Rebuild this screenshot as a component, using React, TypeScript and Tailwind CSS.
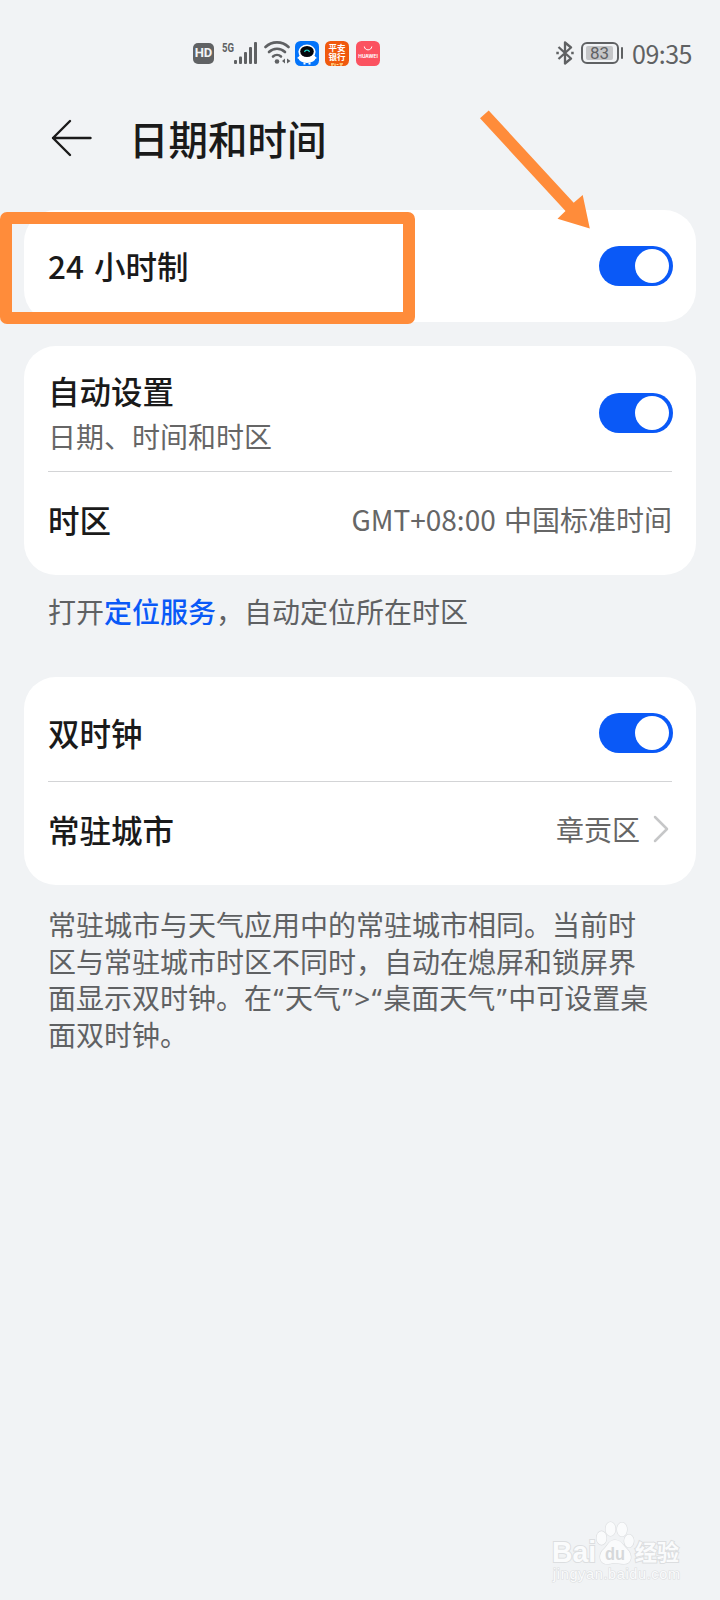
import type { ReactNode } from "react";

function Switch() {
  return (
    <button
      role="switch"
      aria-checked="true"
      className="-mr-px flex h-10 w-[74px] shrink-0 items-center justify-end rounded-full bg-[#0a59f7] pr-1"
    >
      <span className="h-[34px] w-[34px] rounded-full bg-white" />
    </button>
  );
}

function Card({ children, className = "" }: { children: ReactNode; className?: string }) {
  return (
    <section className={`mx-6 rounded-[32px] bg-white px-6 py-2 ${className}`}>{children}</section>
  );
}

function Row({
  label,
  sub,
  divider,
  children,
}: {
  label: string;
  sub?: string;
  divider?: boolean;
  children: ReactNode;
}) {
  return (
    <div
      className={`flex items-center justify-between ${sub ? "h-[117px]" : "h-24"} ${divider ? "border-t border-[#d3d4d6]" : ""}`}
    >
      <div className={sub ? "pt-px" : "pb-0.5"}>
        <div className="text-[31.5px] leading-[44px] font-medium [word-spacing:3px] text-[#1a1a1a]">{label}</div>
        {sub && <div className="pt-0.5 text-[28px] leading-[44px] text-[#666]">{sub}</div>}
      </div>
      {children}
    </div>
  );
}

function StatusBar() {
  return (
    <header className="flex h-[106px] items-center text-[#5f6163]">
      <div className="ml-[193px] flex h-[21px] w-[21px] items-center justify-center rounded-[5px] bg-[#606264] font-['Roboto'] text-[13px] font-bold text-[#f1f3f5]">
        HD
      </div>
      <svg className="ml-2 h-6 w-[35px] overflow-visible" viewBox="0 0 35 24" fill="currentColor">
        <text x="0" y="11" fontFamily="Roboto" fontSize="13" fontWeight="700" textLength="12" lengthAdjust="spacingAndGlyphs">
          5G
        </text>
        <rect x="12" y="19" width="3" height="4" rx="1" />
        <rect x="17" y="15.5" width="3" height="7.5" rx="1" />
        <rect x="22" y="11" width="3" height="12" rx="1" />
        <rect x="27" y="6" width="3" height="17" rx="1" />
        <rect x="32" y="1" width="3" height="22" rx="1" />
      </svg>
      <svg className="ml-[7px] h-6 w-[27px]" viewBox="0 0 27 24" fill="none" stroke="currentColor" strokeWidth="2.6" strokeLinecap="round">
        <path d="M1.5 6a16.5 16.5 0 0 1 23 0" />
        <path d="M5 11a11.5 11.5 0 0 1 16 0" />
        <path d="M9 15.5a6 6 0 0 1 8 0" />
        <circle cx="13" cy="20.5" r="2.3" fill="currentColor" stroke="none" />
        <path d="M21 17.5v5l-3-2.5zM23 17.5v5l3.5-2.5z" fill="currentColor" stroke="none" />
      </svg>
      <svg className="ml-1 h-[25px] w-6" viewBox="0 0 24 25">
        <rect width="24" height="25" rx="5.5" fill="#0474fa" />
        <ellipse cx="12" cy="17" rx="8.5" ry="5" fill="#fff" />
        <path d="M2 17l4-3v5zM22 17l-4-3v5z" fill="#fff" />
        <ellipse cx="12" cy="10.8" rx="8.6" ry="7.3" fill="#fff" />
        <ellipse cx="12" cy="10.5" rx="6.8" ry="5.6" fill="#05070d" />
        <path d="M9.5 11a2.6 2.6 0 0 1 5 0" stroke="#22d3c5" strokeWidth="1.3" fill="none" />
        <path d="M9.5 21.5v2M14.5 21.5v2" stroke="#fff" strokeWidth="2" />
      </svg>
      <div className="ml-1.5 flex h-[25px] w-6 flex-col items-center rounded-[5.5px] bg-[#f0590d] pt-[2px] text-[8.5px] leading-[9.5px] font-bold text-white">
        <span>平安</span>
        <span>银行</span>
        <svg className="mt-px h-[3px] w-3" viewBox="0 0 12 3" stroke="#ffdf8a" strokeWidth="1.2">
          <path d="M0 .8h3M1 .8V3M4 .5v2.5M5.5 1.5h2M8.5 .8h3.500M10 .8V3" />
        </svg>
      </div>
      <svg className="ml-[7px] h-[25px] w-6" viewBox="0 0 24 25">
        <rect width="24" height="25" rx="5.5" fill="#fb5260" />
        <path d="M8.3 5.5c.5 4.5 7 4.5 7.5 0" stroke="#fff" strokeWidth="1" fill="none" />
        <text x="2.3" y="17" fill="#fff" fontFamily="Inter" fontSize="4.8" fontWeight="700" textLength="19.5">
          HUAWEI
        </text>
      </svg>
      <svg className="ml-auto h-6 w-[18px]" viewBox="0 0 18 24" fill="none" stroke="currentColor" strokeWidth="2.3" strokeLinejoin="round">
        <path d="M2.5 6l12.500 11.500L9 22.500V1.500l6 5L2.500 18" />
        <path d="M.3 12h2.500M15.200 12h2.500" />
      </svg>
      <div className="ml-[7px] flex h-[22px] w-[38px] items-center justify-center rounded-[6px] border-2 border-[#5f6163]">
        <span className="flex h-[14px] w-[27px] items-center justify-center rounded-[2px] bg-[#c5c6c8] font-['Roboto'] text-[17px] leading-[14px]">
          83
        </span>
      </div>
      <span className="ml-[2px] h-3 w-[2.5px] rounded-sm bg-[#5f6163]" />
      <span className="mr-[28px] ml-[9px] w-[60px] text-[25px] leading-none tracking-[-0.5px] whitespace-nowrap">
        09:35
      </span>
    </header>
  );
}

function Watermark() {
  return (
    <svg className="absolute top-[1518px] left-[548px] h-[68px] w-[140px]" viewBox="0 0 140 68" fill="#fafbfc" stroke="#dcdee0" strokeWidth="1.2" paintOrder="stroke">
      <text x="4" y="44" fontFamily="Liberation Sans" fontSize="30" fontWeight="700" textLength="44" lengthAdjust="spacingAndGlyphs" strokeWidth="2">
        Bai
      </text>
      <ellipse cx="53.5" cy="20" rx="5" ry="6.8" />
      <ellipse cx="62.5" cy="11" rx="5" ry="7" />
      <ellipse cx="74" cy="11.5" rx="5" ry="7" />
      <ellipse cx="81" cy="23" rx="4.8" ry="6.5" />
      <path d="M67 22c-6 0-7 5-11 9-6 5-5 15 3 15 4 0 5-1 8-1s5 1 9 1c8 0 9-9 3-15-4-4-6-9-12-9z" />
      <text x="57" y="42" fontFamily="Liberation Sans" fontSize="19" fill="#d6d8da" stroke="none" fontWeight="700" textLength="20" lengthAdjust="spacingAndGlyphs">
        du
      </text>
      <text x="87" y="42" fontFamily="Noto Sans CJK SC" fontSize="22" fontWeight="700" textLength="44" strokeWidth="2">
        经验
      </text>
      <text x="5" y="61" fontFamily="Liberation Sans" fontSize="14.5" textLength="127" lengthAdjust="spacing" strokeWidth="1.2">
        jingyan.baidu.com
      </text>
    </svg>
  );
}

const noteLines = [
  "常驻城市与天气应用中的常驻城市相同。当前时",
  "区与常驻城市时区不同时，自动在熄屏和锁屏界",
  "面显示双时钟。在“天气”>“桌面天气”中可设置桌",
  "面双时钟。",
];

export default function App() {
  return (
    <div
      lang="zh-CN"
      className="relative h-[1600px] w-[720px] overflow-hidden bg-[#f1f3f5] font-['Noto_Sans_CJK_SC',sans-serif]"
    >
      <StatusBar />

      <div className="flex h-[104px] items-start pl-[51px]">
        <svg className="mt-3 h-10 w-[42px]" viewBox="0 0 42 40" fill="none" stroke="#1a1a1a" strokeWidth="2.4" strokeLinecap="round" strokeLinejoin="round">
          <path d="M19 3L2 20l17 17M2 20h37.500" />
        </svg>
        <h1 className="ml-[36px] text-[39.5px] leading-[64px] font-medium text-[#1a1a1a]">日期和时间</h1>
      </div>

      <Card>
        <Row label="24 小时制">
          <Switch />
        </Row>
      </Card>

      <Card className="mt-6">
        <Row label="自动设置" sub="日期、时间和时区">
          <Switch />
        </Row>
        <Row label="时区" divider>
          <span className="pb-0.5 text-[28px] [word-spacing:2px] text-[#666]">GMT+08:00 中国标准时间</span>
        </Row>
      </Card>

      <p className="mx-12 mt-[15px] h-[87px] text-[28px] leading-[42px] text-[#5f6163]">
        打开<span className="font-medium text-[#0a59f7]">定位服务</span>，自动定位所在时区
      </p>

      <Card>
        <Row label="双时钟">
          <Switch />
        </Row>
        <Row label="常驻城市" divider>
          <span className="flex items-center pb-0.5 text-[28px] text-[#666]">
            章贡区
            <svg className="mr-[3px] ml-[13px] h-7 w-4" viewBox="0 0 16 28" fill="none" stroke="#c6c7c8" strokeWidth="2.5" strokeLinecap="round" strokeLinejoin="round">
              <path d="M2 2l12 12L2 26" />
            </svg>
          </span>
        </Row>
      </Card>

      <p className="mx-12 mt-[22px] text-[28px] leading-[36.7px] whitespace-nowrap text-[#5f6163]">
        {noteLines.map((line) => (
          <span key={line} className="block font-['Noto_Sans','Noto_Sans_CJK_SC',sans-serif]">
            {line.split(/([“”])/).map((part, i) =>
              part === "“" || part === "”" ? (
                <span key={i} className="px-[1.5px]">
                  {part}
                </span>
              ) : (
                part
              ),
            )}
          </span>
        ))}
      </p>

      {/* Tutorial marks drawn over the page */}
      <div className="absolute top-[212px] left-0 h-28 w-[415px] rounded-[7px] border-12 border-[#ff8c3a]" />
      <svg className="absolute top-[106px] left-[476px] h-[126px] w-[118px]" viewBox="476 106 118 126" fill="#ff8c3a">
        <path d="M480 118.3L488.7 110.5L573.7 202.7L582.7 195L589.8 228.5L557.5 218.7L565.5 211z" />
      </svg>

      <Watermark />
    </div>
  );
}
